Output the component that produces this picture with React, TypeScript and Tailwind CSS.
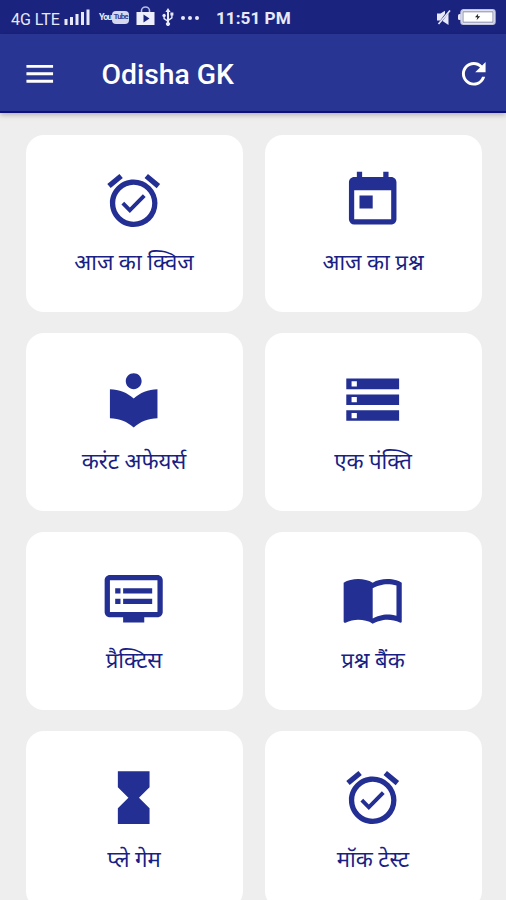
import React from 'react';
import { IconType } from 'react-icons';
import {
  MdAlarmOn,
  MdDvr,
  MdHourglassFull,
  MdLocalLibrary,
  MdMenu,
  MdRefresh,
  MdStorage,
  MdToday,
} from 'react-icons/md';

interface MenuItem {
  label: string;
  icon: IconType | React.FC<{ className?: string }>;
}

const OpenBook: React.FC<{ className?: string }> = ({ className }) => (
  <svg viewBox="0 0 24 24" fill="currentColor" className={className}>
    <path d="M21 5c-1.11-.35-2.33-.5-3.5-.5-1.95 0-4.05.4-5.5 1.5-1.45-1.1-3.55-1.5-5.5-1.5S2.45 4.9 1 6v14.65c0 .25.25.5.5.5.1 0 .15-.05.25-.05C3.1 20.45 5.05 20 6.5 20c1.95 0 4.05.4 5.5 1.5 1.35-.85 3.8-1.5 5.5-1.5 1.65 0 3.35.3 4.75 1.05.1.05.15.05.25.05.25 0 .5-.25.5-.5V6c-.6-.45-1.25-.75-2-1zm0 13.5c-1.1-.35-2.3-.5-3.5-.5-1.7 0-4.15.65-5.5 1.5V8c1.35-.85 3.8-1.5 5.5-1.5 1.2 0 2.4.15 3.5.5v11.5z" />
  </svg>
);

const items: MenuItem[] = [
  { label: 'आज का क्विज', icon: MdAlarmOn },
  { label: 'आज का प्रश्न', icon: MdToday },
  { label: 'करंट अफेयर्स', icon: MdLocalLibrary },
  { label: 'एक पंक्ति', icon: MdStorage },
  { label: 'प्रैक्टिस', icon: MdDvr },
  { label: 'प्रश्न बैंक', icon: OpenBook },
  { label: 'प्ले गेम', icon: MdHourglassFull },
  { label: 'मॉक टेस्ट', icon: MdAlarmOn },
];

const StatusBar: React.FC = () => (
  <div className="h-[34px] shrink-0 bg-[#1a237e] text-[#e8e9f8] flex items-center pl-[11px] pr-[10px]">
    <span className="w-[50px] text-[16px] leading-none tracking-[-0.05px] whitespace-nowrap pt-[5px]">4G LTE</span>
    {/* Signal strength */}
    <svg width="27" height="16" viewBox="0 0 27 16" fill="currentColor" className="ml-[3px]">
      <rect x="0.5" y="10" width="3" height="6" />
      <rect x="6" y="8" width="3" height="8" />
      <rect x="11.5" y="5" width="3" height="11" />
      <rect x="17" y="3" width="3" height="13" />
      <rect x="22.5" y="0.5" width="3" height="15.5" />
    </svg>
    <div className="ml-2 w-[31px] flex items-center text-[9px] font-bold leading-none tracking-[-1px]">
      <span className="w-[13px]">You</span>
      <span className="w-[17px] h-[13px] rounded-[4px] bg-[#d5d7ed] text-[#3a4292] text-[8px] flex items-center justify-center">Tube</span>
    </div>
    {/* Play store bag */}
    <svg width="19" height="19" viewBox="0 0 19 19" className="ml-[6px] mb-[3px]">
      <path d="M5.5 6V4.5a4 3.5 0 0 1 8 0V6" fill="none" stroke="#b9bde2" strokeWidth="1.6" />
      <path d="M.5 6h18v13H.5z" fill="#eeeffc" />
      <path d="M7.5 8.5v8l6-4z" fill="#1a237e" />
    </svg>
    {/* USB */}
    <svg width="12" height="18" viewBox="0 0 12 18" className="ml-[7px]" fill="currentColor">
      <path d="M6 0l2.6 4H7v7l2.2-1.5V7.5H8.4v-3h3v3h-.8v2.8L7 12.7v1.5a2 2 0 1 1-2 0v-.6L1.4 11V8.9a1.6 1.6 0 1 1 1.4 0v1.4L5 11.7V4H3.4z" />
    </svg>
    <span className="ml-[7px] mt-px flex gap-[3px]">
      <i className="w-[4px] h-[4px] rounded-full bg-[#e8e9f8]" />
      <i className="w-[4px] h-[4px] rounded-full bg-[#e8e9f8]" />
      <i className="w-[4px] h-[4px] rounded-full bg-[#e8e9f8]" />
    </span>
    <span className="ml-[17px] text-[17.2px] font-bold leading-none whitespace-nowrap pt-[3px]">11:51 PM</span>
    {/* Muted */}
    <svg width="14" height="15" viewBox="0 0 14 15" className="ml-auto" fill="currentColor">
      <path d="M0 3.5h3.5L8 .8V4L3.2 10.5H0zM11.5 3v12L5.5 11z" />
      <path d="M13 .5L1.5 14" fill="none" stroke="currentColor" strokeWidth="1.6" />
    </svg>
    {/* Charging battery */}
    <svg width="38" height="16" viewBox="0 0 38 16" className="ml-[7px]">
      <rect x="0" y="5" width="4" height="6" rx="1.5" fill="#e8e9f8" />
      <rect x="3" y=".8" width="34" height="14.4" rx="2.5" fill="#fff" stroke="#c3c5df" strokeWidth="1.4" />
      <rect x="5" y="2.8" width="30" height="10.4" fill="#fff" stroke="#8487ad" strokeWidth="1" />
      <path d="M20.2 4.8l-3.2 3.5h2.4l-.8 3 3.6-4h-2.4z" fill="#222" />
    </svg>
  </div>
);

const MenuCard: React.FC<{ item: MenuItem }> = ({ item }) => {
  const Icon = item.icon;
  return (
    <button className="h-[177.5px] rounded-[18px] bg-white text-[#232f93] flex flex-col items-center pt-[34.5px]">
      <Icon className="w-[63.4px] h-[63.4px] shrink-0" />
      <span className="mt-[10px] text-[22.2px] leading-[40px] text-[#1a1f85] whitespace-nowrap">{item.label}</span>
    </button>
  );
};

const App: React.FC = () => {
  return (
    <div className="h-[900px] overflow-hidden bg-[#eeeeee] font-['Roboto','Noto_Sans',sans-serif] flex flex-col">
      <StatusBar />
      <header className="h-[79px] shrink-0 bg-[#283593] border-b-2 border-[#10107c] text-white flex items-center pl-[22px] pr-[15px] pt-[2px] shadow-[0_2px_5px_rgba(0,0,0,0.25)]">
        <MdMenu className="w-[35.5px] h-[35.5px]" />
        <h1 className="ml-[44px] pt-[4px] text-[28.3px] font-medium leading-none">Odisha GK</h1>
        <MdRefresh className="ml-auto w-[35.5px] h-[35.5px]" />
      </header>
      <main className="grid grid-cols-2 gap-x-[22px] gap-y-[21.4px] pl-[25.5px] pt-[21.5px] pr-[24.5px]">
        {items.map(item => (
          <MenuCard key={item.label} item={item} />
        ))}
      </main>
    </div>
  );
};

export default App;
